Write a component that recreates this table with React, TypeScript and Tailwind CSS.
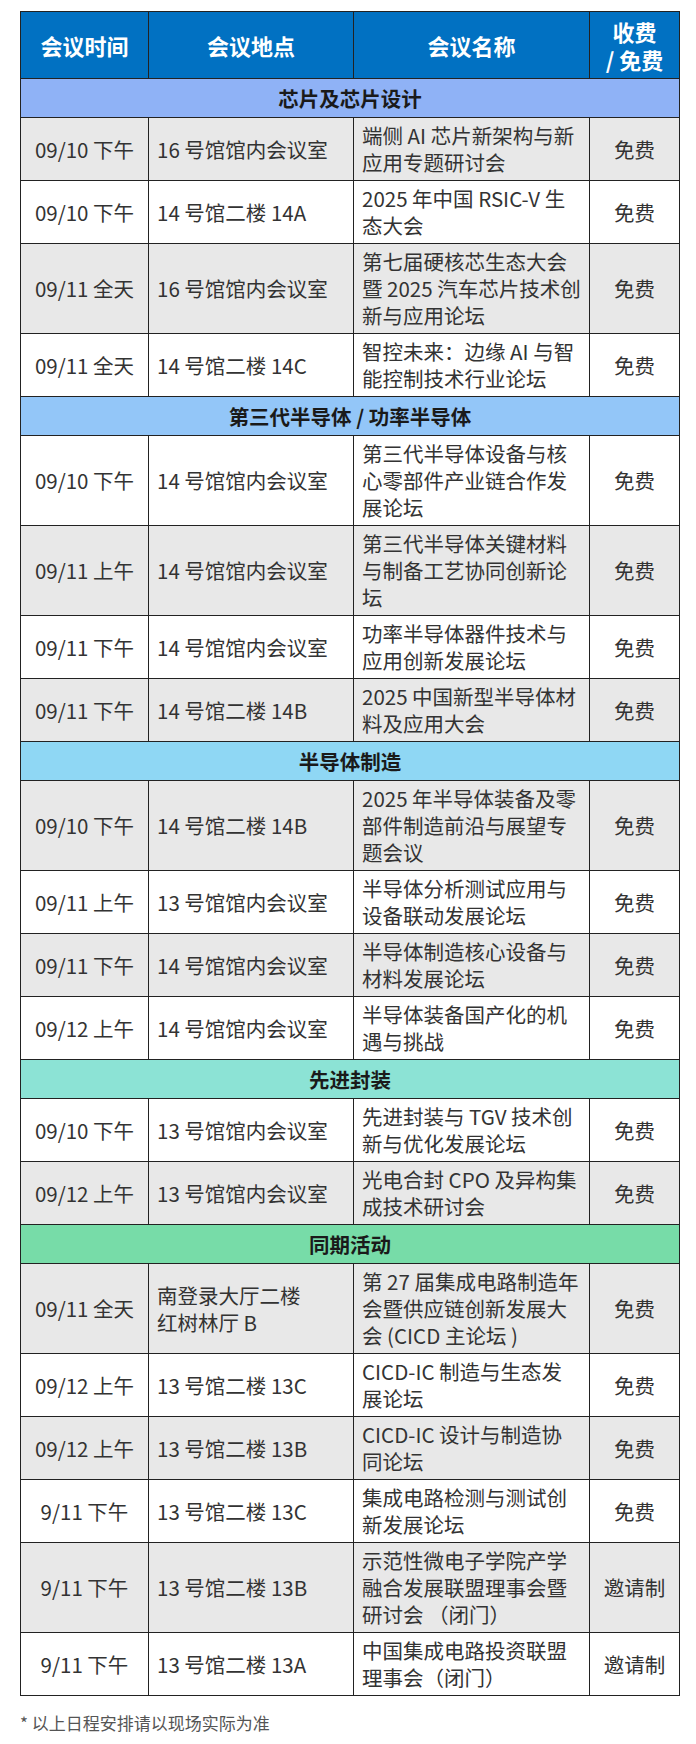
type Row = {
  time: string;
  place: string | string[];
  title: string[];
  fee: string;
};

type Section = { title: string; bg: string; rows: Row[] };

const sections: Section[] = [
  {
    title: "芯片及芯片设计",
    bg: "bg-[#8fb2f6]",
    rows: [
      { time: "09/10 下午", place: "16 号馆馆内会议室", title: ["端侧 AI 芯片新架构与新", "应用专题研讨会"], fee: "免费" },
      { time: "09/10 下午", place: "14 号馆二楼 14A", title: ["2025 年中国 RSIC-V 生", "态大会"], fee: "免费" },
      { time: "09/11 全天", place: "16 号馆馆内会议室", title: ["第七届硬核芯生态大会", "暨 2025 汽车芯片技术创", "新与应用论坛"], fee: "免费" },
      { time: "09/11 全天", place: "14 号馆二楼 14C", title: ["智控未来：边缘 AI 与智", "能控制技术行业论坛"], fee: "免费" },
    ],
  },
  {
    title: "第三代半导体 / 功率半导体",
    bg: "bg-[#93c6f8]",
    rows: [
      { time: "09/10 下午", place: "14 号馆馆内会议室", title: ["第三代半导体设备与核", "心零部件产业链合作发", "展论坛"], fee: "免费" },
      { time: "09/11 上午", place: "14 号馆馆内会议室", title: ["第三代半导体关键材料", "与制备工艺协同创新论", "坛"], fee: "免费" },
      { time: "09/11 下午", place: "14 号馆馆内会议室", title: ["功率半导体器件技术与", "应用创新发展论坛"], fee: "免费" },
      { time: "09/11 下午", place: "14 号馆二楼 14B", title: ["2025 中国新型半导体材", "料及应用大会"], fee: "免费" },
    ],
  },
  {
    title: "半导体制造",
    bg: "bg-[#8fd7f4]",
    rows: [
      { time: "09/10 下午", place: "14 号馆二楼 14B", title: ["2025 年半导体装备及零", "部件制造前沿与展望专", "题会议"], fee: "免费" },
      { time: "09/11 上午", place: "13 号馆馆内会议室", title: ["半导体分析测试应用与", "设备联动发展论坛"], fee: "免费" },
      { time: "09/11 下午", place: "14 号馆馆内会议室", title: ["半导体制造核心设备与", "材料发展论坛"], fee: "免费" },
      { time: "09/12 上午", place: "14 号馆馆内会议室", title: ["半导体装备国产化的机", "遇与挑战"], fee: "免费" },
    ],
  },
  {
    title: "先进封装",
    bg: "bg-[#8ce3d5]",
    rows: [
      { time: "09/10 下午", place: "13 号馆馆内会议室", title: ["先进封装与 TGV 技术创", "新与优化发展论坛"], fee: "免费" },
      { time: "09/12 上午", place: "13 号馆馆内会议室", title: ["光电合封 CPO 及异构集", "成技术研讨会"], fee: "免费" },
    ],
  },
  {
    title: "同期活动",
    bg: "bg-[#77dca8]",
    rows: [
      { time: "09/11 全天", place: ["南登录大厅二楼", "红树林厅 B"], title: ["第 27 届集成电路制造年", "会暨供应链创新发展大", "会 (CICD 主论坛 )"], fee: "免费" },
      { time: "09/12 上午", place: "13 号馆二楼 13C", title: ["CICD-IC 制造与生态发", "展论坛"], fee: "免费" },
      { time: "09/12 上午", place: "13 号馆二楼 13B", title: ["CICD-IC 设计与制造协", "同论坛"], fee: "免费" },
      { time: "9/11 下午", place: "13 号馆二楼 13C", title: ["集成电路检测与测试创", "新发展论坛"], fee: "免费" },
      { time: "9/11 下午", place: "13 号馆二楼 13B", title: ["示范性微电子学院产学", "融合发展联盟理事会暨", "研讨会 （闭门）"], fee: "邀请制" },
      { time: "9/11 下午", place: "13 号馆二楼 13A", title: ["中国集成电路投资联盟", "理事会（闭门）"], fee: "邀请制" },
    ],
  },
];

function Lines({ lines }: { lines: string[] }) {
  return (
    <>
      {lines.map((l, i) => (
        <span key={i} className="block whitespace-nowrap">
          {l}
        </span>
      ))}
    </>
  );
}

const th = "border border-[#222] bg-[#0171c2] px-1 py-[5px] text-center align-middle text-[22px] font-bold leading-[28px] text-white";
const td = "border border-[#222] py-1 align-middle text-[20.5px] leading-[27px] text-[#333]";

export default function App() {
  return (
    <div className="min-h-[1744px] bg-white pt-[11px] font-['Noto_Sans_CJK_SC','Noto_Sans',sans-serif]">
      <table className="ml-5 w-[659px] table-fixed border-collapse">
        <colgroup>
          <col className="w-[128px]" />
          <col className="w-[205px]" />
          <col className="w-[236px]" />
          <col className="w-[90px]" />
        </colgroup>
        <thead>
          <tr>
            <th className={th}>会议时间</th>
            <th className={th}>会议地点</th>
            <th className={th}>会议名称</th>
            <th className={th}>
              <span className="block">收费</span>
              <span className="block">/ 免费</span>
            </th>
          </tr>
        </thead>
        <tbody>
          {sections.map((s, si) => (
            <Block key={s.title} section={s} greyFirst={si % 2 === 0} />
          ))}
        </tbody>
      </table>
      <p className="ml-5 mt-[14px] text-[17px] leading-[26px] text-[#555]">* 以上日程安排请以现场实际为准</p>
    </div>
  );
}

function Block({ section, greyFirst }: { section: Section; greyFirst: boolean }) {
  return (
    <>
      <tr>
        <td
          colSpan={4}
          className={`border border-[#222] ${section.bg} py-[5px] text-center text-[20.5px] font-bold leading-[28px] text-[#1a1a1a]`}
        >
          {section.title}
        </td>
      </tr>
      {section.rows.map((r, i) => {
        const grey = (i % 2 === 0) === greyFirst;
        return (
          <tr key={i} className={grey ? "bg-[#e8e8e8]" : "bg-white"}>
            <td className={`${td} text-center`}>{r.time}</td>
            <td className={`${td} px-2`}>
              {Array.isArray(r.place) ? <Lines lines={r.place} /> : r.place}
            </td>
            <td className={`${td} px-2`}>
              <Lines lines={r.title} />
            </td>
            <td className={`${td} text-center`}>{r.fee}</td>
          </tr>
        );
      })}
    </>
  );
}
